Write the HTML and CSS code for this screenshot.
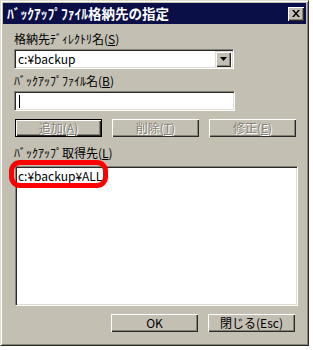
FILE: index.html
```html
<!DOCTYPE html>
<html lang="ja">
<head>
    <meta charset="UTF-8">
    <title>ﾊﾞｯｸｱｯﾌﾟﾌｧｲﾙ格納先の指定</title>
    <link rel="stylesheet" href="styles.css">
</head>
<body>
    <div class="window">
        <div class="titlebar">
            <span class="title">ﾊﾞｯｸｱｯﾌﾟﾌｧｲﾙ格納先の指定</span>
            <span class="close-btn">
                <svg width="8" height="7" viewBox="0 0 8 7">
                    <path d="M0 0h2l2 2.5 2-2.5h2l-3 3.5 3 3.5h-2l-2-2.5-2 2.5h-2l3-3.5z" fill="#000"/>
                </svg>
            </span>
        </div>

        <div class="content">
            <div class="label">格納先ﾃﾞｨﾚｸﾄﾘ名(<u>S</u>)</div>
            <div class="combo sunken">
                <span class="combo-text">c:¥backup</span>
                <span class="combo-btn">
                    <svg width="7" height="4" viewBox="0 0 7 4"><path d="M0 0h7l-3.5 4z" fill="#000"/></svg>
                </span>
            </div>

            <div class="label label-gap">ﾊﾞｯｸｱｯﾌﾟﾌｧｲﾙ名(<u>B</u>)</div>
            <div class="textbox sunken"><span class="caret"></span></div>

            <div class="btn-row top-row">
                <div class="btn default disabled"><span>追加(<u>A</u>)</span></div>
                <div class="btn disabled"><span>削除(<u>T</u>)</span></div>
                <div class="btn disabled"><span>修正(<u>E</u>)</span></div>
            </div>

            <div class="label label-list">ﾊﾞｯｸｱｯﾌﾟ取得先(<u>L</u>)</div>
            <div class="listbox sunken">
                <div class="list-item">c:¥backup¥ALL</div>
            </div>

            <div class="btn-row bottom-row">
                <div class="btn"><span>OK</span></div>
                <div class="btn"><span>閉じる(Esc)</span></div>
            </div>
        </div>

        <!-- red marker drawn over the list entry -->
        <div class="marker"></div>
    </div>
</body>
</html>
```

FILE: styles.css
```css
* {
    margin: 0;
    padding: 0;
    box-sizing: border-box;
}

body {
    background: #fff;
    font-family: "Noto Sans CJK JP", "DejaVu Sans", sans-serif;
    font-size: 12px;
    color: #000;
}

/* Dialog frame */
.window {
    position: relative;
    width: 309px;
    height: 346px;
    padding: 2px;
    background: #c3bfb3;
    border: 1px solid;
    border-color: #dedbd2 #2a2a2a #2a2a2a #dedbd2;
    box-shadow: inset 1px 1px #fff, inset -1px -1px #85827a;
}

/* Title bar */
.titlebar {
    height: 21px;
    background: #0a0f48;
    display: flex;
    align-items: center;
    justify-content: space-between;
    padding: 0 2px 0 4px;
}

.title {
    color: #fff;
    font-weight: bold;
    font-size: 13.5px;
    line-height: 21px;
}

.close-btn {
    width: 16px;
    height: 14px;
    background: #c3bfb3;
    display: flex;
    align-items: center;
    justify-content: center;
    box-shadow: inset 1px 1px #fff, inset -1px -1px #2a2a2a, inset -2px -2px #85827a;
}

/* Body of the dialog */
.content {
    padding-left: 11px;
}

.label {
    margin-top: 8px;
    height: 14px;
    line-height: 14px;
    font-size: 12px;
    white-space: nowrap;
}

.label-gap {
    margin-top: 5px;
}

.label-list {
    margin-top: 9px;
}

.label u,
.btn u {
    text-decoration: underline;
    text-underline-offset: 1px;
}

/* Sunken field border */
.sunken {
    background: #fff;
    border: 1px solid;
    border-color: #85827a #fff #fff #85827a;
    box-shadow: inset 1px 1px #2a2a2a, inset -1px -1px #dedbd2;
}

.combo {
    margin-top: 3px;
    width: 220px;
    height: 20px;
    display: flex;
    align-items: center;
    justify-content: space-between;
    padding: 2px;
}

.combo-text {
    padding-left: 1px;
    line-height: 14px;
}

.combo-btn {
    width: 16px;
    height: 16px;
    background: #c3bfb3;
    display: flex;
    align-items: center;
    justify-content: center;
    box-shadow: inset 1px 1px #dedbd2, inset 2px 2px #fff, inset -1px -1px #2a2a2a, inset -2px -2px #85827a;
}

.textbox {
    margin-top: 3px;
    width: 221px;
    height: 20px;
    padding: 3px 4px;
}

.caret {
    display: block;
    width: 1px;
    height: 13px;
    background: #000;
}

/* Buttons */
.btn-row {
    display: flex;
    gap: 10px;
}

.top-row {
    margin-top: 8px;
    padding-left: 1px;
}

.bottom-row {
    margin-top: 8px;
    justify-content: flex-end;
    padding-right: 11px;
}

.btn {
    width: 87px;
    height: 18px;
    background: #c3bfb3;
    display: flex;
    align-items: center;
    justify-content: center;
    box-shadow: inset 1px 1px #fff, inset -1px -1px #2a2a2a, inset -2px -2px #85827a;
    font-size: 12px;
    line-height: 14px;
}

.btn.default {
    border: 1px solid #000;
}

.btn.disabled span {
    color: #85827a;
    text-shadow: 1px 1px #fff;
}

/* List box */
.listbox {
    margin-top: 6px;
    margin-left: 1px;
    width: 283px;
    height: 140px;
    padding: 2px 2px;
}

.list-item {
    padding-left: 0;
    line-height: 14px;
}

/* Red annotation ring */
.marker {
    position: absolute;
    left: 8px;
    top: 159px;
    width: 99px;
    height: 28px;
    border: 5px solid #f00;
    border-radius: 11px;
}
```
